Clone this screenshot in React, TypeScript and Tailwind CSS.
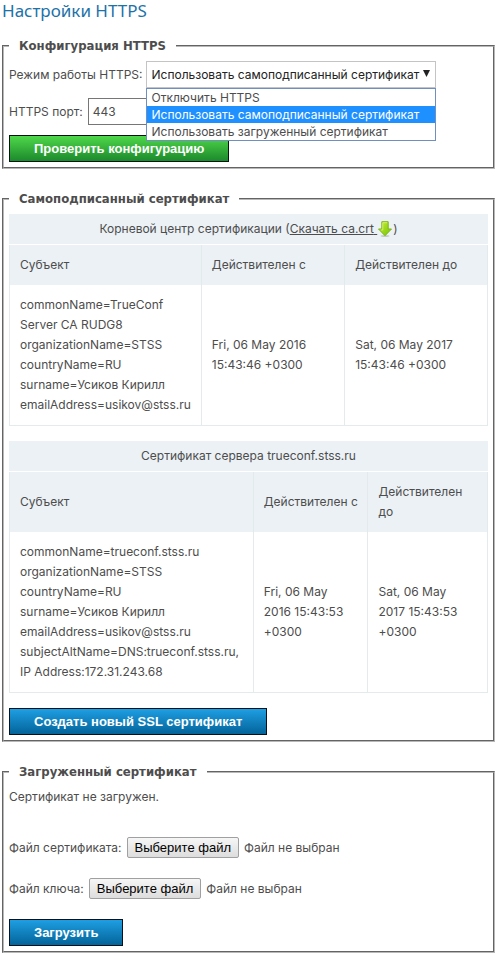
import { useRef, useState, type ReactNode } from 'react'

const MODES = ['Отключить HTTPS', 'Использовать самоподписанный сертификат', 'Использовать загруженный сертификат']

const ROOT_SUBJECT = [
  'commonName=TrueConf Server CA RUDG8',
  'organizationName=STSS',
  'countryName=RU',
  'surname=Усиков Кирилл',
  'emailAddress=usikov@stss.ru',
]

// \u00a0 keeps the address and the timestamps in one piece when the column wraps
const SERVER_SUBJECT = [
  'commonName=trueconf.stss.ru',
  'organizationName=STSS',
  'countryName=RU',
  'surname=Усиков Кирилл',
  'emailAddress=usikov@stss.ru',
  'subjectAltName=DNS:trueconf.stss.ru, IP\u00a0Address:172.31.243.68',
]

function Section({ title, children }: { title: string; children: ReactNode }) {
  return (
    <fieldset className="min-w-0 border-2 border-[#b8b8b8] p-[5px] [border-style:groove]">
      <legend className='px-[10px] font-["DejaVu_Sans_Condensed","DejaVu_Sans",sans-serif] text-[13px] font-bold'>
        {title}
      </legend>
      {children}
    </fieldset>
  )
}

function ActionButton({ children, green = false }: { children: ReactNode; green?: boolean }) {
  return (
    <button
      type="button"
      className={[
        'block h-[27px] border border-[#06121a] bg-linear-to-b px-6 font-["Liberation_Sans",sans-serif] text-[13px] leading-5 font-bold text-white',
        green ? 'from-[#4fd84a] to-[#1b8a2c]' : 'from-[#1e9fe3] to-[#04649a]',
      ].join(' ')}
    >
      {children}
    </button>
  )
}

function DownloadIcon() {
  return (
    <svg width="16" height="16" viewBox="0 0 16 16" className="inline-block align-[-4px]" aria-hidden="true">
      <defs>
        <linearGradient id="arrow" x1="0" y1="0" x2="1" y2="1">
          <stop offset="0" stopColor="#c8ee3a" />
          <stop offset="1" stopColor="#72c400" />
        </linearGradient>
      </defs>
      <ellipse cx="8" cy="15" rx="4.500" ry="0.8" fill="#b5bfb2" />
      <path
        d="M4.800 0.700h6.400v7.300h3.300L8 14.700 1.500 8h3.300z"
        fill="url(#arrow)"
        stroke="#7fb516"
        strokeLinejoin="round"
      />
      <path d="M5.800 1.700h4.400M5.800 1.700v7.300H3.900" fill="none" stroke="#dcf57a" strokeWidth="0.8" />
    </svg>
  )
}

interface CertProps {
  caption: ReactNode
  subject: string[]
  from: string
  to: string
  widths: [string, string]
}

function CertTable({ caption, subject, from, to, widths }: CertProps) {
  const head = 'border-x border-[#e2eaec] bg-[#ebf1f5] p-[10px] text-left font-normal'
  const cell = 'border border-t-0 border-[#e4ebec] p-[10px]'
  return (
    <table className="mb-[15px] w-full border-collapse">
      <caption className="mb-px bg-[#ebf1f5] p-[5px] text-center">{caption}</caption>
      <thead>
        <tr>
          <th className={`${head} ${widths[0]}`}>Субъект</th>
          <th className={`${head} ${widths[1]} pr-0 whitespace-nowrap`}>Действителен с</th>
          <th className={head}>Действителен до</th>
        </tr>
      </thead>
      <tbody>
        <tr>
          <td className={cell}>
            {subject.map((line) => (
              <div key={line}>{line}</div>
            ))}
          </td>
          <td className={cell}>{from}</td>
          <td className={cell}>{to}</td>
        </tr>
      </tbody>
    </table>
  )
}

function FileRow({ id, label }: { id: string; label: string }) {
  const input = useRef<HTMLInputElement>(null)
  const [name, setName] = useState('Файл не выбран')
  return (
    <div className="relative mb-5 flex h-[21px] items-center gap-[5px]">
      <label htmlFor={id}>{label}</label>
      <input
        ref={input}
        id={id}
        type="file"
        tabIndex={-1}
        className="sr-only"
        onChange={(e) => setName(e.target.files?.[0]?.name ?? 'Файл не выбран')}
      />
      <button
        type="button"
        onClick={() => input.current?.click()}
        className='h-[21px] rounded-[2px] border border-[#a0a0a0] bg-linear-to-b from-[#f6f6f6] to-[#dddddd] px-[7px] font-["Liberation_Sans",sans-serif] text-[13px] leading-[19px] text-black'
      >
        Выберите файл
      </button>
      <span>{name}</span>
    </div>
  )
}

export default function App() {
  const [mode, setMode] = useState(MODES[1])
  const [open, setOpen] = useState(true)
  const [port, setPort] = useState('443')

  return (
    <main className='flex flex-col gap-5 bg-white pr-px pl-[2px] font-["Inter","Noto_Sans",sans-serif] text-[12px] leading-5 text-[#4d4d4d]'>
      <h1 className='-mb-[6px] font-["Noto_Sans",sans-serif] text-[17px] leading-[22px] text-[#1d72a8]'>
        Настройки HTTPS
      </h1>

      <Section title="Конфигурация HTTPS">
        <div className="mb-[10px] flex items-center gap-1">
          <label htmlFor="mode">Режим работы HTTPS:</label>
          <div className="relative">
            <select
              id="mode"
              value={mode}
              onChange={(e) => setMode(e.target.value)}
              onMouseDown={(e) => {
                e.preventDefault()
                setOpen(!open)
              }}
              className="block h-[27px] w-[290px] appearance-none border border-[#c4c4c4] bg-white pl-1 text-[#222222]"
            >
              {MODES.map((m) => (
                <option key={m}>{m}</option>
              ))}
            </select>
            <svg
              width="7"
              height="7"
              viewBox="0 0 7 7"
              className="pointer-events-none absolute top-[9px] right-[6px]"
              aria-hidden="true"
            >
              <path d="M0 0h7L3.500 7z" fill="#222222" />
            </svg>
            {open && (
              <ul
                className="absolute top-full left-0 z-10 w-full border border-[#6f8fc0] bg-white leading-[17px]"
                role="listbox"
              >
                {MODES.map((m) => (
                  <li
                    key={m}
                    role="option"
                    aria-selected={m === mode}
                    onClick={() => {
                      setMode(m)
                      setOpen(false)
                    }}
                    className={m === mode ? 'bg-[#1e90ff] px-1 text-white' : 'px-1'}
                  >
                    {m}
                  </li>
                ))}
              </ul>
            )}
          </div>
        </div>
        <div className="mb-[10px] flex items-center gap-[5px]">
          <label htmlFor="port">HTTPS порт:</label>
          <input
            id="port"
            value={port}
            onChange={(e) => setPort(e.target.value)}
            className="h-[27px] w-[120px] border border-[#767676] bg-white px-1"
          />
        </div>
        <ActionButton green>Проверить конфигурацию</ActionButton>
      </Section>

      <Section title="Самоподписанный сертификат">
        <CertTable
          caption={
            <>
              Корневой центр сертификации (
              <a href="#ca" className="underline">
                Скачать ca.crt{' '}
              </a>
              <DownloadIcon />)
            </>
          }
          subject={ROOT_SUBJECT}
          from="Fri, 06 May 2016 15:43:46 +0300"
          to="Sat, 06 May 2017 15:43:46 +0300"
          widths={['w-[40%]', 'w-[30%]']}
        />
        <CertTable
          caption="Сертификат сервера trueconf.stss.ru"
          subject={SERVER_SUBJECT}
          from={'Fri, 06 May 2016\u00a015:43:53 +0300'}
          to={'Sat, 06 May 2017\u00a015:43:53 +0300'}
          widths={['w-[51%]', 'w-[24%]']}
        />
        <ActionButton>Создать новый SSL сертификат</ActionButton>
      </Section>

      <Section title="Загруженный сертификат">
        <p className="mb-[30px]">Сертификат не загружен.</p>
        <FileRow id="cert-file" label="Файл сертификата:" />
        <FileRow id="key-file" label="Файл ключа:" />
        <ActionButton>Загрузить</ActionButton>
      </Section>
    </main>
  )
}
